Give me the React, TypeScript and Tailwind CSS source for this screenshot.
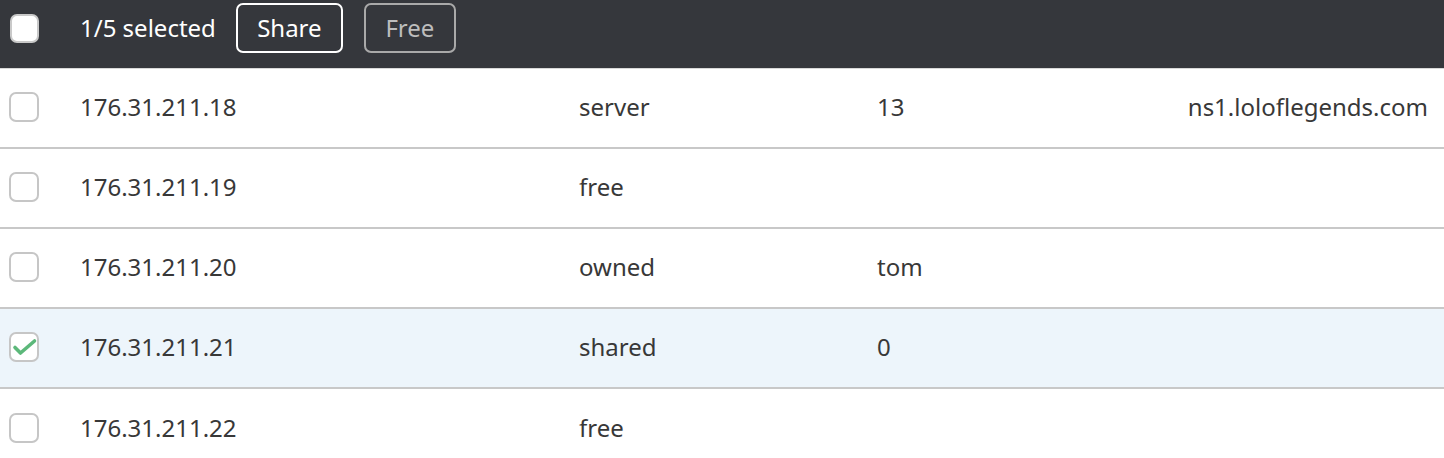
type Row = { ip: string; kind: string; owner?: string; host?: string; selected?: boolean };

const ROWS: Row[] = [
  { ip: '176.31.211.18', kind: 'server', owner: '13', host: 'ns1.loloflegends.com' },
  { ip: '176.31.211.19', kind: 'free' },
  { ip: '176.31.211.20', kind: 'owned', owner: 'tom' },
  { ip: '176.31.211.21', kind: 'shared', owner: '0', selected: true },
  { ip: '176.31.211.22', kind: 'free' },
];

function Box({ checked, dark }: { checked?: boolean; dark?: boolean }) {
  return (
    <span
      className={
        dark
          ? 'relative flex size-[29px] items-center justify-center rounded-[7px] border-2 border-[#c9c9c9] bg-white'
          : 'relative flex size-[30px] items-center justify-center rounded-[7px] border-2 border-[#c6c6c6] bg-white'
      }
    >
      {checked && (
        <svg viewBox="0 0 30 30" className="absolute -inset-[2px] size-[30px]">
          <polyline
            points="6,15.5 11.5,21 25.5,9"
            fill="none"
            stroke="#5cb87a"
            strokeWidth="3.6"
            strokeLinecap="round"
            strokeLinejoin="round"
          />
        </svg>
      )}
    </span>
  );
}

export default function App() {
  return (
    <div className="w-[1444px] bg-white font-['Noto_Sans',sans-serif] text-[24px] text-[#383838]">
      {/* bulk action bar */}
      <div className="flex h-[69px] items-center border-b border-[#d8d8d8] bg-[#35373c] pb-[12px]">
        <div className="w-[80px] pl-[10px]">
          <Box dark />
        </div>
        <span className="text-white">1/5 selected</span>
        <button className="ml-[20px] h-[50px] w-[107px] rounded-[7px] border-2 border-white text-white">
          Share
        </button>
        <button className="ml-[21px] h-[50px] w-[92px] rounded-[7px] border-2 border-[#a9a9a9] text-[#bdbdbd]">
          Free
        </button>
      </div>

      {ROWS.map((r) => (
        <div
          key={r.ip}
          className={
            'grid h-[80px] grid-cols-[80px_499px_298px_1fr] items-center border-b-2 border-[#c8c8c8] pb-[2px] last:border-b-0 ' +
            (r.selected ? 'bg-[#edf5fb]' : 'bg-white')
          }
        >
          <div className="pl-[9px]">
            <Box checked={r.selected} />
          </div>
          <span>{r.ip}</span>
          <span>{r.kind}</span>
          <div className="flex justify-between pr-4">
            <span>{r.owner}</span>
            <span>{r.host}</span>
          </div>
        </div>
      ))}
    </div>
  );
}
